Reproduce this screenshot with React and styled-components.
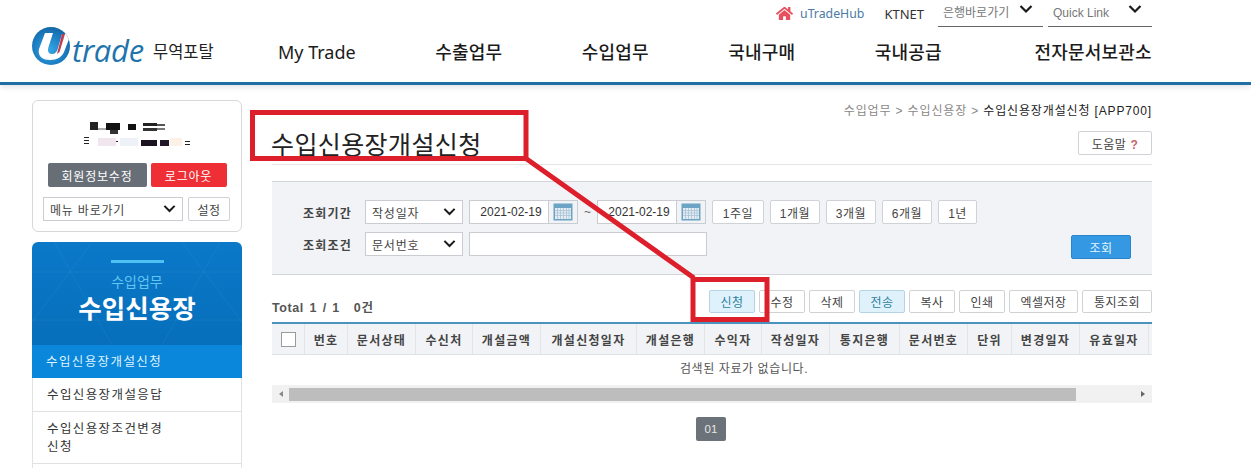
import styled, { createGlobalStyle } from "styled-components";
import { FaHome } from "react-icons/fa";

const GlobalStyle = createGlobalStyle`
  html, body {
    margin: 0;
    height: 468px;
    overflow: hidden;
    background: #fff;
  }
  body {
    font-family: "Liberation Sans", "Noto Sans CJK KR", sans-serif;
    font-size: 12px;
    color: #333;
  }
  * { box-sizing: border-box; }
`;

const Page = styled.div`
  position: relative;
  width: 1251px;
  height: 468px;
  overflow: hidden;
`;

/* header */
const Header = styled.header`
  height: 85px;
  border-bottom: 3px solid #1f6fa6;
  box-shadow: 0 2px 6px rgba(0, 0, 0, 0.12);
  padding: 0 99px 0 32px;
`;

const TopBar = styled.div`
  height: 27px;
  display: flex;
  justify-content: flex-end;
  align-items: center;
`;

const HubLink = styled.a`
  display: flex;
  align-items: center;
  gap: 7px;
  color: #4b7ba6;
  font-family: "Noto Sans", sans-serif;
  font-size: 12.3px;
  margin-right: 20px;
  > svg { color: #e8505f; }
`;

const CompanyLink = styled.a`
  color: #333;
  font-family: "Noto Sans", sans-serif;
  font-size: 13px;
  margin-right: 14px;
`;

const TopSelect = styled.div`
  width: ${(p) => p.$width}px;
  height: 27px;
  margin-left: ${(p) => p.$gap || 0}px;
  border-bottom: 1px solid #666;
  padding: 0 10px 0 5px;
  display: flex;
  justify-content: space-between;
  color: #777;
  font-size: 12px;
  line-height: 27px;
  > svg { margin-top: 4px; }
`;

const MainRow = styled.div`
  height: 49px;
  display: flex;
  align-items: center;
`;

const Logo = styled.div`
  width: 247px;
  display: flex;
  align-items: center;
  margin-top: -4px;
`;

const LogoSvg = styled.svg`
  flex: none;
  margin-top: -7px;
`;

const LogoWord = styled.span`
  font-family: "Open Sans", sans-serif;
  font-style: italic;
  font-size: 31px;
  font-weight: 400;
  letter-spacing: -0.3px;
  line-height: 38px;
  color: #1f74ad;
  margin-left: 2px;
  width: 76px;
`;

const LogoLabel = styled.span`
  font-family: "Noto Sans CJK KR", sans-serif;
  font-size: 16.5px;
  color: #222;
  margin-left: 5px;
  margin-top: 2px;
`;

const Nav = styled.nav`
  flex: 1;
  display: flex;
  gap: 79.5px;
  margin-left: -1px;
`;

const NavItem = styled.a`
  font-family: "Noto Sans", "Noto Sans CJK KR", sans-serif;
  font-size: 18px;
  font-weight: ${(p) => (p.$latin ? 400 : 500)};
  line-height: 26px;
  letter-spacing: ${(p) => (p.$latin ? 0 : "0.2px")};
  color: #1b1b1b;
  white-space: nowrap;
  margin-left: ${(p) => (p.$last ? "13px" : 0)};
`;

/* body layout */
const Body = styled.div`
  display: flex;
  gap: 30px;
  padding: 15px 99px 0 32px;
`;

const Sidebar = styled.aside`
  width: 210px;
  flex: none;
`;

const UserBox = styled.div`
  height: 132px;
  border: 1px solid #d8d8d8;
  border-radius: 6px;
  padding: 19px 10px 0;
  display: flex;
  flex-direction: column;
  align-items: center;
`;

const MosaicSvg = styled.svg`
  flex: none;
`;

const UserButtons = styled.div`
  display: flex;
  gap: 4px;
  margin-top: 13px;
`;

const UserButton = styled.button`
  width: ${(p) => p.$width}px;
  height: 24px;
  border: 0;
  border-radius: 2px;
  padding: 0;
  background: ${(p) => p.$bg};
  color: #fff;
  font: inherit;
  letter-spacing: 0.8px;
`;

const QuickRow = styled.div`
  align-self: stretch;
  display: flex;
  gap: 5px;
  margin-top: 10px;
`;

const SelectBox = styled.div`
  width: ${(p) => p.$width}px;
  height: ${(p) => p.$height || 24}px;
  flex: none;
  background: #fff;
  border: 1px solid #c9ccd1;
  padding: 0 6px;
  display: flex;
  align-items: center;
  justify-content: space-between;
  letter-spacing: 0.8px;
  color: #444;
`;

const PlainButton = styled.button`
  width: ${(p) => p.$width}px;
  height: ${(p) => p.$height || 24}px;
  flex: none;
  padding: 0;
  background: #fff;
  border: 1px solid #cfd2d6;
  border-radius: 2px;
  color: #444;
  font: inherit;
  letter-spacing: 0.5px;
`;

const SideHead = styled.div`
  position: relative;
  margin-top: 10px;
  height: 103px;
  border-radius: 6px 6px 0 0;
  background: linear-gradient(#0b78c8, #066fbb);
  display: flex;
  flex-direction: column;
  align-items: center;
  overflow: hidden;
`;

const HeadRule = styled.span`
  width: 53px;
  height: 3px;
  margin-top: 18px;
  background: #4fc0f2;
`;

const HeadSub = styled.span`
  margin-top: 9px;
  font-size: 14px;
  line-height: 20px;
  color: #63c5f3;
`;

const HeadTitle = styled.span`
  margin-top: -1px;
  font-family: "Noto Sans CJK KR", sans-serif;
  font-size: 25.5px;
  font-weight: 700;
  line-height: 32px;
  color: #fff;
`;

const HeadPattern = styled.svg`
  position: absolute;
  inset: 0;
`;

const SideItem = styled.a`
  display: block;
  padding: 8px 14px 7px;
  min-height: 33px;
  font-size: 12.5px;
  line-height: 18px;
  letter-spacing: 1.4px;
  color: ${(p) => (p.$active ? "#dff3ff" : "#333")};
  background: ${(p) => (p.$active ? "#0a86da" : "#fff")};
  border: solid #e2e2e2;
  border-width: ${(p) => (p.$active ? 0 : "0 1px 1px")};
  width: 210px;
`;

/* main */
const Main = styled.main`
  width: 880px;
  flex: none;
`;

const Breadcrumb = styled.div`
  height: 22px;
  text-align: right;
  line-height: 22px;
  color: #888;
  font-size: 12px;
  letter-spacing: 0.85px;
  white-space: nowrap;
  > b { font-weight: 400; color: #222; }
`;

const TitleRow = styled.div`
  height: 43px;
  display: flex;
  justify-content: space-between;
  border-bottom: 1px solid #e6e6e6;
`;

const Title = styled.h1`
  margin: 0;
  font-family: "Noto Sans CJK KR", sans-serif;
  font-size: 25px;
  font-weight: 400;
  line-height: 42px;
  color: #222;
  letter-spacing: 0.4px;
  margin-left: -1px;
`;

const HelpButton = styled(PlainButton)`
  margin-top: 9px;
  > span { color: #c9636c; font-weight: 700; margin-left: 4px; }
`;

const SearchPanel = styled.section`
  height: 94px;
  margin-top: 16px;
  background: #f1f3f6;
  border: solid #d3d5d9;
  border-width: 1px 0 1px;
  padding: 18px 21px 15px 31px;
  display: flex;
  justify-content: space-between;
  align-items: flex-end;
`;

const SearchRows = styled.div`
  display: flex;
  flex-direction: column;
  align-self: flex-start;
  gap: 8px;
`;

const SearchRow = styled.div`
  display: flex;
  align-items: center;
  gap: 6px;
`;

const FieldLabel = styled.label`
  width: 56px;
  font-weight: 700;
  letter-spacing: 1.2px;
  color: #444;
  white-space: nowrap;
`;

const DateField = styled.div`
  width: 109px;
  height: 24px;
  flex: none;
  display: flex;
  background: #fff;
  border: 1px solid #c9ccd1;
  > span { flex: 1; line-height: 22px; text-align: center; color: #333; padding-left: 4px; }
`;

const CalendarCell = styled.div`
  width: 29px;
  border-left: 1px solid #c9ccd1;
  background: #f1f3f6;
  display: flex;
  align-items: center;
  justify-content: center;
`;

const Tilde = styled.span`
  width: 7px;
  color: #666;
`;

const TextField = styled.div`
  width: 238px;
  height: 24px;
  background: #fff;
  border: 1px solid #c9ccd1;
`;

const SearchButton = styled.button`
  width: 60px;
  height: 24px;
  padding: 0;
  background: #3498e2;
  border: 1px solid #2a86cc;
  border-radius: 2px;
  color: #e8f6ff;
  font: inherit;
  letter-spacing: 0.5px;
`;

const Toolbar = styled.div`
  display: flex;
  justify-content: space-between;
  align-items: flex-end;
  margin-top: 15px;
  height: 23px;
`;

const TotalText = styled.div`
  font-weight: 700;
  font-size: 12.5px;
  color: #555;
  letter-spacing: 0.6px;
  word-spacing: 1.5px;
  line-height: 12px;
  margin-bottom: -1px;
  > span { margin-left: 14px; }
`;

const ActionGroup = styled.div`
  display: flex;
  gap: 4px;
`;

const ActionButton = styled.button`
  width: ${(p) => p.$width || 46}px;
  height: 23px;
  padding: 0;
  border: 1px solid ${(p) => (p.$primary ? "#b5d3e4" : "#d0d3d6")};
  border-radius: 2px;
  background: ${(p) => (p.$primary ? "#dff2fb" : "#fff")};
  color: ${(p) => (p.$primary ? "#2c7f9e" : "#444")};
  font: inherit;
  letter-spacing: 0.5px;
`;

const Table = styled.div`
  margin-top: 9px;
  border-top: 2px solid #4a93bd;
`;

const HeadRow = styled.div`
  height: 31px;
  display: grid;
  grid-template-columns: 33px 43px 68px 57px 68px 96px 68px 57px 68px 70px 68px 44px 68px 69px 3px;
  background: #f1f3f6;
  border-bottom: 1px solid #dfe1e5;
`;

const HeadCell = styled.div`
  display: flex;
  align-items: center;
  justify-content: center;
  border-right: 1px solid #e2e4e8;
  font-weight: 700;
  letter-spacing: 1.3px;
  color: #444;
  white-space: nowrap;
`;

const CheckBox = styled.span`
  width: 15px;
  height: 15px;
  background: #fff;
  border: 1px solid #9b9b9b;
`;

const EmptyRow = styled.div`
  height: 30px;
  padding-left: 64px;
  text-align: center;
  line-height: 29px;
  color: #555;
  letter-spacing: 0.6px;
`;

const ScrollTrack = styled.div`
  height: 18px;
  background: #f1f1f1;
  display: flex;
  align-items: center;
  padding: 0 7px;
`;

const ScrollThumb = styled.div`
  width: 787px;
  height: 13px;
  margin-left: 6px;
  background: #bdbdbd;
`;

const ScrollArrow = styled.span`
  width: 0;
  height: 0;
  border: 3.5px solid transparent;
  border-left: 0;
  border-right: 4px solid #8a8a8a;
  ${(p) => p.$right && "border-right: 0; border-left: 4px solid #666; margin-left: auto;"}
`;

const Pager = styled.div`
  display: flex;
  justify-content: center;
  margin-top: 14px;
  padding-right: 2px;
`;

const PageButton = styled.button`
  width: 30px;
  height: 24px;
  padding: 0;
  border: 0;
  border-radius: 2px;
  background: #6c727a;
  color: #e6e6e6;
  font: inherit;
  font-size: 11.5px;
`;

const Annotation = styled.svg`
  position: absolute;
  inset: 0;
  pointer-events: none;
`;

const Chevron = ({ size = 14 }) => (
  <svg width={size} height={size * 0.72} viewBox="0 0 14 10" fill="none">
    <path d="M1.5 2 L7 7.5 L12.5 2" stroke="#1a1a1a" strokeWidth="2.2" />
  </svg>
);

const CalendarIcon = () => (
  <svg width="20" height="18" viewBox="0 0 20 18">
    <rect x="0.5" y="0.5" width="19" height="17" fill="#6ba4c4" />
    <rect x="2" y="5" width="16" height="11" fill="#e4edf3" />
    <path
      d="M2 7.5H18M2 10H18M2 12.5H18M4.5 5V16M7.5 5V16M10.5 5V16M13.5 5V16M16 5V16"
      stroke="#a9c3d3"
      strokeWidth="0.8"
    />
  </svg>
);

const LogoMark = () => (
  <LogoSvg width="38" height="38" viewBox="0 0 38 38">
    <defs>
      <radialGradient id="logoBall" cx="0.45" cy="0.6" r="0.7">
        <stop offset="0" stopColor="#35a8e6" />
        <stop offset="0.6" stopColor="#1b7cc0" />
        <stop offset="1" stopColor="#125c94" />
      </radialGradient>
      <clipPath id="logoClip">
        <circle cx="19" cy="19" r="19" />
      </clipPath>
    </defs>
    <circle cx="19" cy="19" r="19" fill="url(#logoBall)" />
    <g clipPath="url(#logoClip)">
      <path
        d="M13 6 H21 L16.5 20 C15 25 17 27 20 27 C23 27 25 25 26 21 L30 7 H39 L32 25 C30 30 25 33 18 33 C10 33 5.5 29 7 22 Z"
        fill="#fff"
      />
      <path d="M30 7 H33 L27.5 25 L25 27 Z" fill="#c23a4e" />
    </g>
  </LogoSvg>
);

const mosaic = [
  [6, 2, 8, 8, "#222"], [22, 3, 14, 7, "#111"], [26, 10, 8, 4, "#333"], [14, 8, 8, 2, "#aaa"],
  [44, 4, 8, 6, "#111"], [59, 3, 14, 3, "#222"], [59, 8, 14, 3, "#333"], [73, 4, 8, 2, "#555"],
  [73, 8, 8, 2, "#777"], [0, 17, 5, 1, "#222"], [0, 20, 5, 1, "#222"], [0, 23, 5, 1, "#222"],
  [28, 21, 6, 1, "#222"], [57, 20, 16, 6, "#1c1320"], [76, 20, 9, 6, "#201828"], [101, 21, 5, 1, "#222"],
  [101, 24, 5, 1, "#222"], [14, 18, 18, 8, "#f2e6ee"], [36, 18, 18, 8, "#eef1f8"], [86, 18, 12, 8, "#fbf1e6"],
];

const UserMosaic = () => (
  <MosaicSvg width="106" height="30" viewBox="0 0 106 30">
    {mosaic.map(([x, y, w, h, c], i) => (
      <rect key={i} x={x} y={y} width={w} height={h} fill={c} />
    ))}
  </MosaicSvg>
);

const columns = [
  "번호", "문서상태", "수신처", "개설금액", "개설신청일자", "개설은행", "수익자",
  "작성일자", "통지은행", "문서번호", "단위", "변경일자", "유효일자",
];

const navItems = ["수출업무", "수입업무", "국내구매", "국내공급"];
const periods = [
  ["1주일", 52], ["1개월", 50], ["3개월", 50], ["6개월", 50], ["1년", 39],
];
const actions = [
  ["신청", 46, true], ["수정", 46], ["삭제", 46], ["전송", 46, true], ["복사", 46], ["인쇄", 46],
  ["엑셀저장", 69], ["통지조회", 70],
];

export default function App() {
  return (
    <Page>
      <GlobalStyle />
      <Header>
        <TopBar>
          <HubLink>
            <FaHome size={17} />
            uTradeHub
          </HubLink>
          <CompanyLink>KTNET</CompanyLink>
          <TopSelect $width={105}>
            은행바로가기
            <Chevron />
          </TopSelect>
          <TopSelect $width={104} $gap={5}>
            Quick Link
            <Chevron />
          </TopSelect>
        </TopBar>
        <MainRow>
          <Logo>
            <LogoMark />
            <LogoWord>trade</LogoWord>
            <LogoLabel>무역포탈</LogoLabel>
          </Logo>
          <Nav>
            <NavItem $latin>My Trade</NavItem>
            {navItems.map((item) => (
              <NavItem key={item}>{item}</NavItem>
            ))}
            <NavItem $last>전자문서보관소</NavItem>
          </Nav>
        </MainRow>
      </Header>

      <Body>
        <Sidebar>
          <UserBox>
            <UserMosaic />
            <UserButtons>
              <UserButton $width={99} $bg="#686e76">회원정보수정</UserButton>
              <UserButton $width={76} $bg="#ee2f36">로그아웃</UserButton>
            </UserButtons>
            <QuickRow>
              <SelectBox $width={140}>
                메뉴 바로가기
                <Chevron size={13} />
              </SelectBox>
              <PlainButton $width={42}>설정</PlainButton>
            </QuickRow>
          </UserBox>

          <SideHead>
            <HeadPattern width="210" height="103" viewBox="0 0 210 103" fill="none">
              <path
                d="M22 0 L80 103 M188 0 L130 103 M60 0 L0 80 M150 0 L210 80 M0 30 H210 M0 78 H210"
                stroke="#fff"
                strokeOpacity="0.05"
              />
            </HeadPattern>
            <HeadRule />
            <HeadSub>수입업무</HeadSub>
            <HeadTitle>수입신용장</HeadTitle>
          </SideHead>
          <SideItem $active>수입신용장개설신청</SideItem>
          <SideItem>수입신용장개설응답</SideItem>
          <SideItem>
            수입신용장조건변경
            <br />
            신청
          </SideItem>
          <SideItem />
        </Sidebar>

        <Main>
          <Breadcrumb>
            수입업무 &gt; 수입신용장 &gt; <b>수입신용장개설신청 [APP700]</b>
          </Breadcrumb>
          <TitleRow>
            <Title>수입신용장개설신청</Title>
            <HelpButton $width={74}>
              도움말<span>?</span>
            </HelpButton>
          </TitleRow>

          <SearchPanel>
            <SearchRows>
              <SearchRow>
                <FieldLabel>조회기간</FieldLabel>
                <SelectBox $width={98}>
                  작성일자
                  <Chevron size={13} />
                </SelectBox>
                <DateField>
                  <span>2021-02-19</span>
                  <CalendarCell>
                    <CalendarIcon />
                  </CalendarCell>
                </DateField>
                <Tilde>~</Tilde>
                <DateField>
                  <span>2021-02-19</span>
                  <CalendarCell>
                    <CalendarIcon />
                  </CalendarCell>
                </DateField>
                {periods.map(([label, width]) => (
                  <PlainButton key={label} $width={width}>{label}</PlainButton>
                ))}
              </SearchRow>
              <SearchRow>
                <FieldLabel>조회조건</FieldLabel>
                <SelectBox $width={98}>
                  문서번호
                  <Chevron size={13} />
                </SelectBox>
                <TextField />
              </SearchRow>
            </SearchRows>
            <SearchButton>조회</SearchButton>
          </SearchPanel>

          <Toolbar>
            <TotalText>
              Total 1 / 1<span>0건</span>
            </TotalText>
            <ActionGroup>
              {actions.map(([label, width, primary]) => (
                <ActionButton key={label} $width={width} $primary={primary}>{label}</ActionButton>
              ))}
            </ActionGroup>
          </Toolbar>

          <Table>
            <HeadRow>
              <HeadCell>
                <CheckBox />
              </HeadCell>
              {columns.map((col) => (
                <HeadCell key={col}>{col}</HeadCell>
              ))}
            </HeadRow>
            <EmptyRow>검색된 자료가 없습니다.</EmptyRow>
            <ScrollTrack>
              <ScrollArrow />
              <ScrollThumb />
              <ScrollArrow $right />
            </ScrollTrack>
          </Table>

          <Pager>
            <PageButton>01</PageButton>
          </Pager>
        </Main>
      </Body>

      <Annotation width="1251" height="468" viewBox="0 0 1251 468" fill="none">
        <path
          d="M252.5 112.5 H526 V158.5 H252.5 Z M526 158.5 L694 278 M693 279.5 H767 V319.5 H693 Z"
          stroke="#dd1f2c"
          strokeWidth="5"
        />
      </Annotation>
    </Page>
  );
}
